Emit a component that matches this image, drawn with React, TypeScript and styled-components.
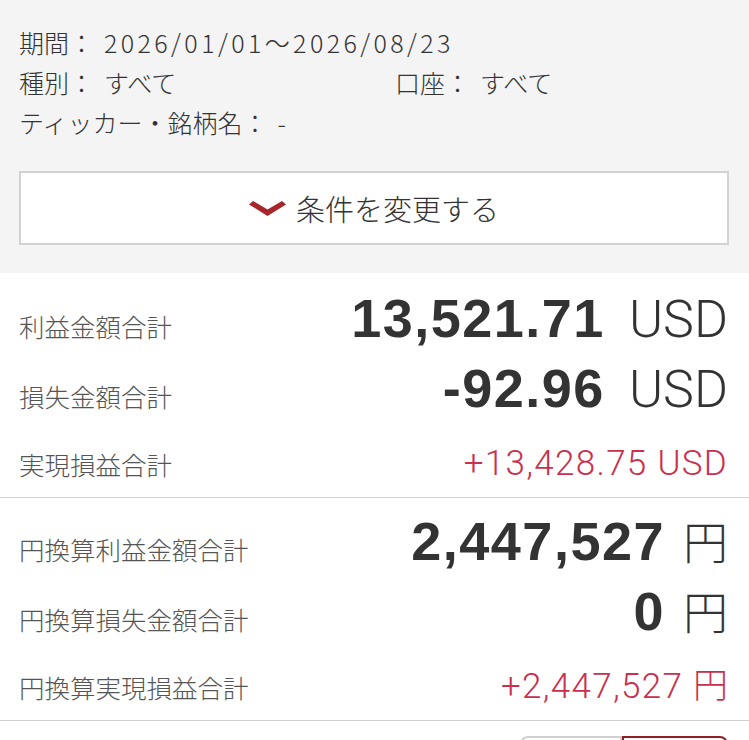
import styled, { createGlobalStyle } from 'styled-components';

const GlobalStyle = createGlobalStyle`
    html, body {
        margin: 0;
        padding: 0;
        background: #ffffff;
    }
    * {
        box-sizing: border-box;
    }
`;

const JP_FONT = `'Noto Sans CJK JP', 'Noto Sans', sans-serif`;
const NUM_FONT = `'Liberation Sans', Arial, sans-serif`;
const THIN_FONT = `Roboto, 'Liberation Sans', sans-serif`;

const Page = styled.div`
    width: 749px;
    font-family: ${JP_FONT};
    color: #333333;
`;

const FilterPanel = styled.section`
    background: #f4f4f4;
    padding: 22px 20px 28px 19px;
`;

const FilterLine = styled.div`
    display: grid;
    grid-template-columns: 376px 1fr;
    height: 40px;
    align-items: center;
    font-size: 25px;
    font-weight: 300;
`;

const FilterItem = styled.div`
    display: flex;
    align-items: center;
    white-space: nowrap;
`;

const FilterKey = styled.span`
    margin-right: 10px;
`;

const FilterValue = styled.span<{ $wide?: boolean }>`
    letter-spacing: ${({ $wide }) => ($wide ? '3.4px' : '0')};
`;

const ChangeButton = styled.button`
    display: flex;
    align-items: center;
    justify-content: center;
    gap: 10px;
    width: 710px;
    height: 74px;
    margin-top: 29px;
    padding: 0;
    background: #ffffff;
    border: 2px solid #d2d2d2;
    font-family: ${JP_FONT};
    font-size: 29px;
    font-weight: 300;
    color: #333333;
    cursor: pointer;
`;

const SummaryBlock = styled.section<{ $top: number }>`
    padding: ${({ $top }) => $top}px 21px 0 19px;
    border-bottom: 1px solid #cfcfcf;
`;

const SummaryRow = styled.div<{ $height: number; $shift: number }>`
    height: ${({ $height }) => $height}px;
    padding-top: ${({ $shift }) => $shift}px;
    display: flex;
    align-items: center;
`;

const RowLine = styled.div`
    flex: 1;
    display: flex;
    align-items: baseline;
    justify-content: space-between;
`;

const Label = styled.span`
    font-size: 25.5px;
    font-weight: 300;
    color: #555555;
`;

const Amount = styled.span<{ $gap: number }>`
    display: flex;
    align-items: baseline;
    gap: ${({ $gap }) => $gap}px;
    color: #333333;
`;

const BigValue = styled.span`
    font-family: ${NUM_FONT};
    font-size: 54px;
    font-weight: 700;
    letter-spacing: 1.5px;
`;

const Unit = styled.span<{ $jp?: boolean }>`
    font-family: ${({ $jp }) => ($jp ? JP_FONT : THIN_FONT)};
    font-size: ${({ $jp }) => ($jp ? '45px' : '52px')};
    font-weight: 300;
`;

const NetValue = styled.span`
    font-family: ${THIN_FONT};
    font-size: 35px;
    font-weight: 300;
    letter-spacing: 1.3px;
    color: #c9304f;
`;

const NetYen = styled.span`
    font-family: ${JP_FONT};
    font-weight: 300;
    letter-spacing: 0;
`;

const Footer = styled.div`
    display: flex;
    justify-content: flex-end;
    padding: 15px 21px 20px 0;
`;

const Segment = styled.button<{ $active?: boolean }>`
    width: ${({ $active }) => ($active ? 106 : 102)}px;
    height: 48px;
    background: #ffffff;
    border: 2px solid ${({ $active }) => ($active ? '#8e1f24' : '#d0d0d0')};
    border-radius: ${({ $active }) => ($active ? '0 8px 8px 0' : '8px 0 0 8px')};
`;

const Chevron = () => (
    <svg width="37" height="15" viewBox="0 0 37 15" aria-hidden="true">
        <polygon
            points="0,3.5 4,0 18.5,8.5 33,0 37,3.5 18.5,15"
            fill="#a8262b"
        />
    </svg>
);

interface SummaryItem {
    label: string;
    value: string;
    unit: string;
    net?: boolean;
    height: number;
    shift: number;
}

const usdRows: SummaryItem[] = [
    { label: '利益金額合計', value: '13,521.71', unit: 'USD', height: 70, shift: 0 },
    { label: '損失金額合計', value: '-92.96', unit: 'USD', height: 70, shift: 0 },
    { label: '実現損益合計', value: '+13,428.75', unit: 'USD', net: true, height: 74, shift: 6 },
];

const yenRows: SummaryItem[] = [
    { label: '円換算利益金額合計', value: '2,447,527', unit: '円', height: 70, shift: 0 },
    { label: '円換算損失金額合計', value: '0', unit: '円', height: 70, shift: 0 },
    { label: '円換算実現損益合計', value: '+2,447,527', unit: '円', net: true, height: 75, shift: 0 },
];

const renderRow = (item: SummaryItem) => (
    <SummaryRow key={item.label} $height={item.height} $shift={item.shift}>
        <RowLine>
            <Label>{item.label}</Label>
            {item.net ? (
                <NetValue>
                    {item.value}{' '}
                    {item.unit === '円' ? <NetYen>{item.unit}</NetYen> : item.unit}
                </NetValue>
            ) : (
                <Amount $gap={item.unit === '円' ? 18 : 24}>
                    <BigValue>{item.value}</BigValue>
                    <Unit $jp={item.unit === '円'}>{item.unit}</Unit>
                </Amount>
            )}
        </RowLine>
    </SummaryRow>
);

const App = () => (
    <Page>
        <GlobalStyle />
        <FilterPanel>
            <FilterLine>
                <FilterItem>
                    <FilterKey>期間：</FilterKey>
                    <FilterValue $wide>2026/01/01〜2026/08/23</FilterValue>
                </FilterItem>
            </FilterLine>
            <FilterLine>
                <FilterItem>
                    <FilterKey>種別：</FilterKey>
                    <FilterValue>すべて</FilterValue>
                </FilterItem>
                <FilterItem>
                    <FilterKey>口座：</FilterKey>
                    <FilterValue>すべて</FilterValue>
                </FilterItem>
            </FilterLine>
            <FilterLine>
                <FilterItem>
                    <FilterKey>ティッカー・銘柄名：</FilterKey>
                    <FilterValue>-</FilterValue>
                </FilterItem>
            </FilterLine>
            <ChangeButton type="button">
                <Chevron />
                条件を変更する
            </ChangeButton>
        </FilterPanel>
        <SummaryBlock $top={10}>{usdRows.map(renderRow)}</SummaryBlock>
        <SummaryBlock $top={7}>{yenRows.map(renderRow)}</SummaryBlock>
        <Footer>
            <Segment type="button" aria-label="USD" />
            <Segment type="button" aria-label="円" $active />
        </Footer>
    </Page>
);

export default App;
